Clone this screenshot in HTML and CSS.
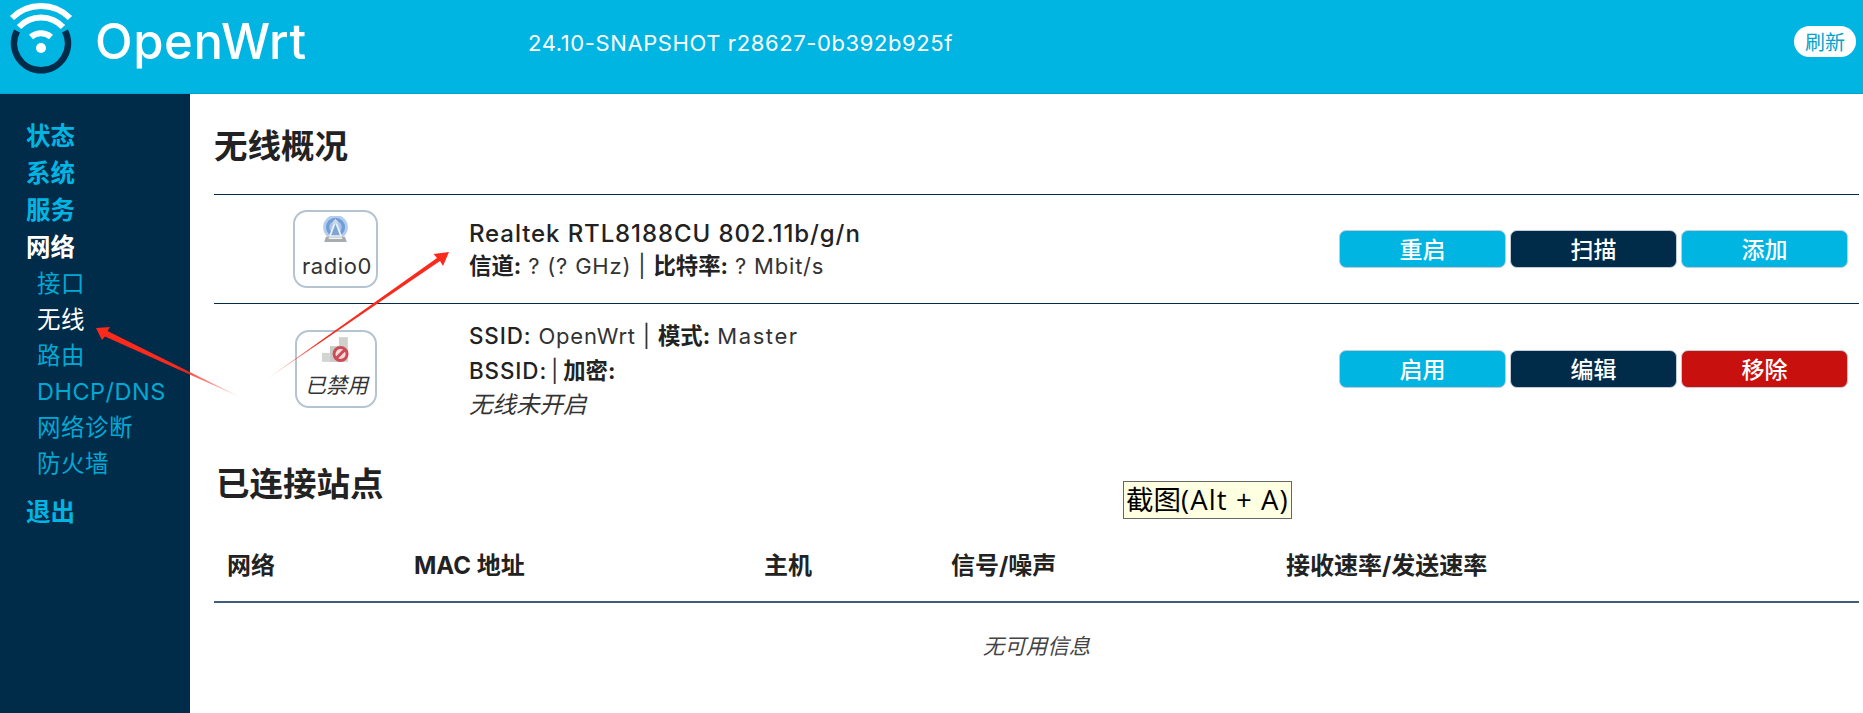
FILE: index.html
```html
<!DOCTYPE html>
<html lang="zh-CN">
<head>
<meta charset="utf-8">
<title>OpenWrt</title>
<link rel="stylesheet" href="styles.css">
</head>
<body>
<header class="topbar">
  <div class="brand">
    <svg class="brand-mark" viewBox="0 0 82 82" width="82" height="82" aria-hidden="true">
      <path class="ring" d="M17 31A27 27 0 1 0 65 31"/>
      <circle class="dot" cx="41" cy="48" r="5"/>
      <path class="wave" d="M31 37A15 15 0 0 1 51 37"/>
      <path class="wave" d="M19 27A30 30 0 0 1 63 27"/>
      <path class="wave" d="M12 18A41 41 0 0 1 70 18"/>
    </svg>
    <span class="brand-name">OpenWrt</span>
  </div>
  <div class="version">24.10-SNAPSHOT r28627-0b392b925f</div>
  <button class="refresh">刷新</button>
</header>
<div class="layout">
  <nav class="sidebar">
    <a class="nav-top">状态</a>
    <a class="nav-top">系统</a>
    <a class="nav-top">服务</a>
    <a class="nav-top is-active">网络</a>
    <a class="nav-sub">接口</a>
    <a class="nav-sub is-active">无线</a>
    <a class="nav-sub">路由</a>
    <a class="nav-sub">DHCP/DNS</a>
    <a class="nav-sub">网络诊断</a>
    <a class="nav-sub">防火墙</a>
    <a class="nav-top nav-logout">退出</a>
  </nav>
  <main class="content">
    <h2 class="title title-first">无线概况</h2>
    <section class="wifi">
      <div class="wifi-row wifi-row-radio">
        <div class="wifi-icon-cell">
          <div class="badge">
            <svg class="badge-icon" viewBox="0 0 24 24" width="27" height="27" aria-hidden="true">
              <circle cx="12" cy="10" r="11" fill="#b5cdec"/>
              <circle cx="12" cy="10" r="8.500" fill="#6f9dd9"/>
              <circle cx="12" cy="10" r="5.500" fill="#a9c5e8"/>
              <path d="M12 4.500 7 18h10z" fill="#7fa5d8" stroke="#eef1f4" stroke-width="1.600"/>
              <circle cx="12" cy="5.500" r="2.200" fill="#cfd8e3"/>
              <path d="M3.500 18.500h17l1.500 4.500H2z" fill="#a8abad"/>
              <path d="M6 19h12v1.500H6z" fill="#f0f1f2"/>
            </svg>
            <span>radio0</span>
          </div>
        </div>
        <div class="wifi-info">
          <div class="radio-name">Realtek RTL8188CU 802.11b/g/n</div>
          <div class="line"><b>信道:</b> ? (? GHz) | <b>比特率:</b> ? Mbit/s</div>
        </div>
        <div class="actions">
          <button class="btn btn-blue">重启</button>
          <button class="btn btn-navy">扫描</button>
          <button class="btn btn-blue">添加</button>
        </div>
      </div>
      <div class="wifi-row wifi-row-net">
        <div class="wifi-icon-cell">
          <div class="badge badge-off">
            <svg class="badge-icon" viewBox="0 0 24 24" width="27" height="27" aria-hidden="true">
              <path d="M0 15h7v8H0z" fill="#d4d4d2"/>
              <path d="M7 9h8v14H7z" fill="#c9c9c7"/>
              <path d="M15 1h8v22h-8z" fill="#d0d0ce"/>
              <circle cx="16.500" cy="16" r="5.800" fill="#f0dcdc" stroke="#cf4b55" stroke-width="2.600"/>
              <path d="m12.500 20 8-8" stroke="#cf4b55" stroke-width="2.600"/>
            </svg>
            <em>已禁用</em>
          </div>
        </div>
        <div class="wifi-info">
          <div class="line"><b class="b-latin">SSID:</b> OpenWrt | <b>模式:</b> <span class="wide">Master</span></div>
          <div class="line line-tight"><b class="b-latin">BSSID:</b> | <b>加密:</b></div>
          <div class="line"><em class="note">无线未开启</em></div>
        </div>
        <div class="actions">
          <button class="btn btn-blue">启用</button>
          <button class="btn btn-navy">编辑</button>
          <button class="btn btn-red">移除</button>
        </div>
      </div>
    </section>
    <h2 class="title title-second">已连接站点</h2>
    <section class="stations">
      <div class="stations-head">
        <div>网络</div>
        <div>MAC 地址</div>
        <div>主机</div>
        <div>信号/噪声</div>
        <div>接收速率/发送速率</div>
      </div>
      <div class="stations-empty"><em>无可用信息</em></div>
    </section>
  </main>
</div>
<svg class="annotations" viewBox="0 0 1863 713" width="1863" height="713" aria-hidden="true">
  <defs>
    <linearGradient id="fadeA" gradientUnits="userSpaceOnUse" x1="96" y1="328" x2="242" y2="398">
      <stop offset="0.55" stop-color="#fb2a1c"/>
      <stop offset="1" stop-color="#fb2a1c" stop-opacity="0.1"/>
    </linearGradient>
    <linearGradient id="fadeB" gradientUnits="userSpaceOnUse" x1="449" y1="252" x2="264" y2="381">
      <stop offset="0.7" stop-color="#fb2a1c"/>
      <stop offset="1" stop-color="#fb2a1c" stop-opacity="0.1"/>
    </linearGradient>
  </defs>
  <path fill="url(#fadeA)" d="M96 328 110 327 107.500 331 242 398 105 336.500 102 340z"/>
  <path fill="url(#fadeB)" d="M449 252 443 266 440 261 264 381 437 258 433.500 254z"/>
</svg>
<div class="shot-tip">截图<span class="shot-keys">(Alt + A)</span></div>
</body>
</html>
```
FILE: styles.css
```css
* { box-sizing: border-box; }
html, body { margin: 0; height: 713px; overflow: hidden; }
body {
  background: #fff;
  color: #222;
  font-family: Inter, "Noto Sans CJK SC", sans-serif;
  font-size: 21px;
  position: relative;
}
button { font-family: inherit; }

.topbar {
  height: 94px;
  background: #00b5e2;
  border-bottom: 1px solid #00a3cc;
  padding-bottom: 11px;
  display: flex;
  align-items: center;
  color: #fff;
}
.brand { width: 528px; display: flex; align-items: center; }
.brand-mark { flex: none; }
.ring { fill: none; stroke: #002b49; stroke-width: 6.500; }
.dot { fill: #fff; }
.wave { fill: none; stroke: #fff; stroke-width: 6; }
.brand-name {
  margin-left: 13px;
  padding-top: 1px;
  font-size: 49px;
  font-weight: 500;
  letter-spacing: 0.6px;
}
.version { padding-top: 3px; font-size: 22px; letter-spacing: 0.6px; }
.refresh {
  margin-left: auto;
  margin-right: 7px;
  width: 62px;
  height: 31px;
  padding: 0;
  border: 0;
  border-radius: 16px;
  background: #fff;
  color: #00a3cc;
  font-size: 20px;
}

.layout { display: flex; height: 619px; }
.sidebar {
  flex: none;
  width: 190px;
  background: #002b49;
  padding-top: 24px;
  display: flex;
  flex-direction: column;
}
.nav-top {
  height: 37px;
  line-height: 37px;
  padding-left: 26px;
  font-size: 24.500px;
  font-weight: 700;
  color: #00b5e2;
}
.nav-sub {
  height: 36px;
  line-height: 36px;
  padding-left: 37px;
  font-size: 23.500px;
  letter-spacing: 0.5px;
  color: #00a9d4;
}
.nav-top.is-active, .nav-sub.is-active { color: #fff; }
.nav-logout { margin-top: 12px; }

.content { flex: 1; padding: 0 4px 0 24px; }
.title { margin: 0; font-size: 33.500px; line-height: 40px; font-weight: 700; color: #222; }
.title-first { margin-top: 32px; margin-bottom: 28px; }
.title-second { margin-top: 26px; margin-left: 2px; }

.wifi-row {
  display: flex;
  align-items: center;
  border-top: 1px solid #002b49;
}
.wifi-row-radio { height: 109px; }
.wifi-icon-cell { flex: none; width: 243px; display: flex; justify-content: center; }
.badge {
  width: 85px;
  height: 78px;
  border: 2px solid #b4c4d2;
  border-radius: 14px;
  display: flex;
  flex-direction: column;
  align-items: center;
  padding-top: 4px;
  font-size: 21px;
  color: #333;
}
.badge span {
  margin-top: 9px;
  padding-left: 3px;
  line-height: 28px;
  font-size: 22px;
  letter-spacing: 0.6px;
}
.badge em { margin-top: 9px; padding-left: 2px; line-height: 28px; white-space: nowrap; }
.badge-off { width: 82px; margin-top: -3px; }
.badge-icon { flex: none; }
.wifi-info { flex: 1; padding: 15px 12px; }
.radio-name {
  margin-top: 3px;
  margin-bottom: -3px;
  font-size: 24px;
  font-weight: 500;
  line-height: 34.600px;
  letter-spacing: 0.9px;
  color: #222;
}
.line { font-size: 22px; line-height: 34.600px; letter-spacing: 0.8px; color: #333; }
.line b { font-size: 22.400px; font-weight: 700; letter-spacing: 0; color: #222; }
.line .b-latin { font-weight: 500; letter-spacing: 0.9px; }
.line .note { font-size: 23.500px; letter-spacing: 0; }
.line .wide { letter-spacing: 1.600px; }
.line-tight { word-spacing: -3px; }
.actions { flex: none; display: flex; gap: 4px; margin-right: 11px; }
.wifi-row-net .actions { margin-top: -3px; }
.btn {
  width: 167px;
  height: 38px;
  padding: 0 0 5px;
  border: 1px solid #c3ccd6;
  border-radius: 7px;
  color: #fff;
  font-size: 23px;
  font-weight: 500;
}
.btn-blue { background: #00b5e2; }
.btn-navy { background: #002b49; }
.btn-red { background: #c8100f; }

.stations { margin-top: 22px; }
.stations-head {
  display: grid;
  grid-template-columns: 187px 350px 187px 335px 1fr;
  height: 77px;
  align-items: center;
  border-bottom: 2px solid #3d5d78;
  font-size: 24px;
  font-weight: 700;
  color: #222;
}
.stations-head > div { padding-left: 13px; }
.stations-empty {
  margin-top: 26px;
  text-align: center;
  font-size: 21.500px;
  line-height: 34px;
  color: #444;
}

.annotations { position: absolute; left: 0; top: 0; pointer-events: none; }
.shot-tip {
  position: absolute;
  left: 1123px;
  top: 481px;
  width: 169px;
  height: 38px;
  background: #ffffe1;
  border: 1px solid #666;
  color: #000;
  font-family: "Open Sans", "Noto Sans CJK SC", sans-serif;
  font-size: 27.500px;
  line-height: 36px;
  padding-left: 2px;
  white-space: nowrap;
}
.shot-keys { letter-spacing: 1.100px; }
```
